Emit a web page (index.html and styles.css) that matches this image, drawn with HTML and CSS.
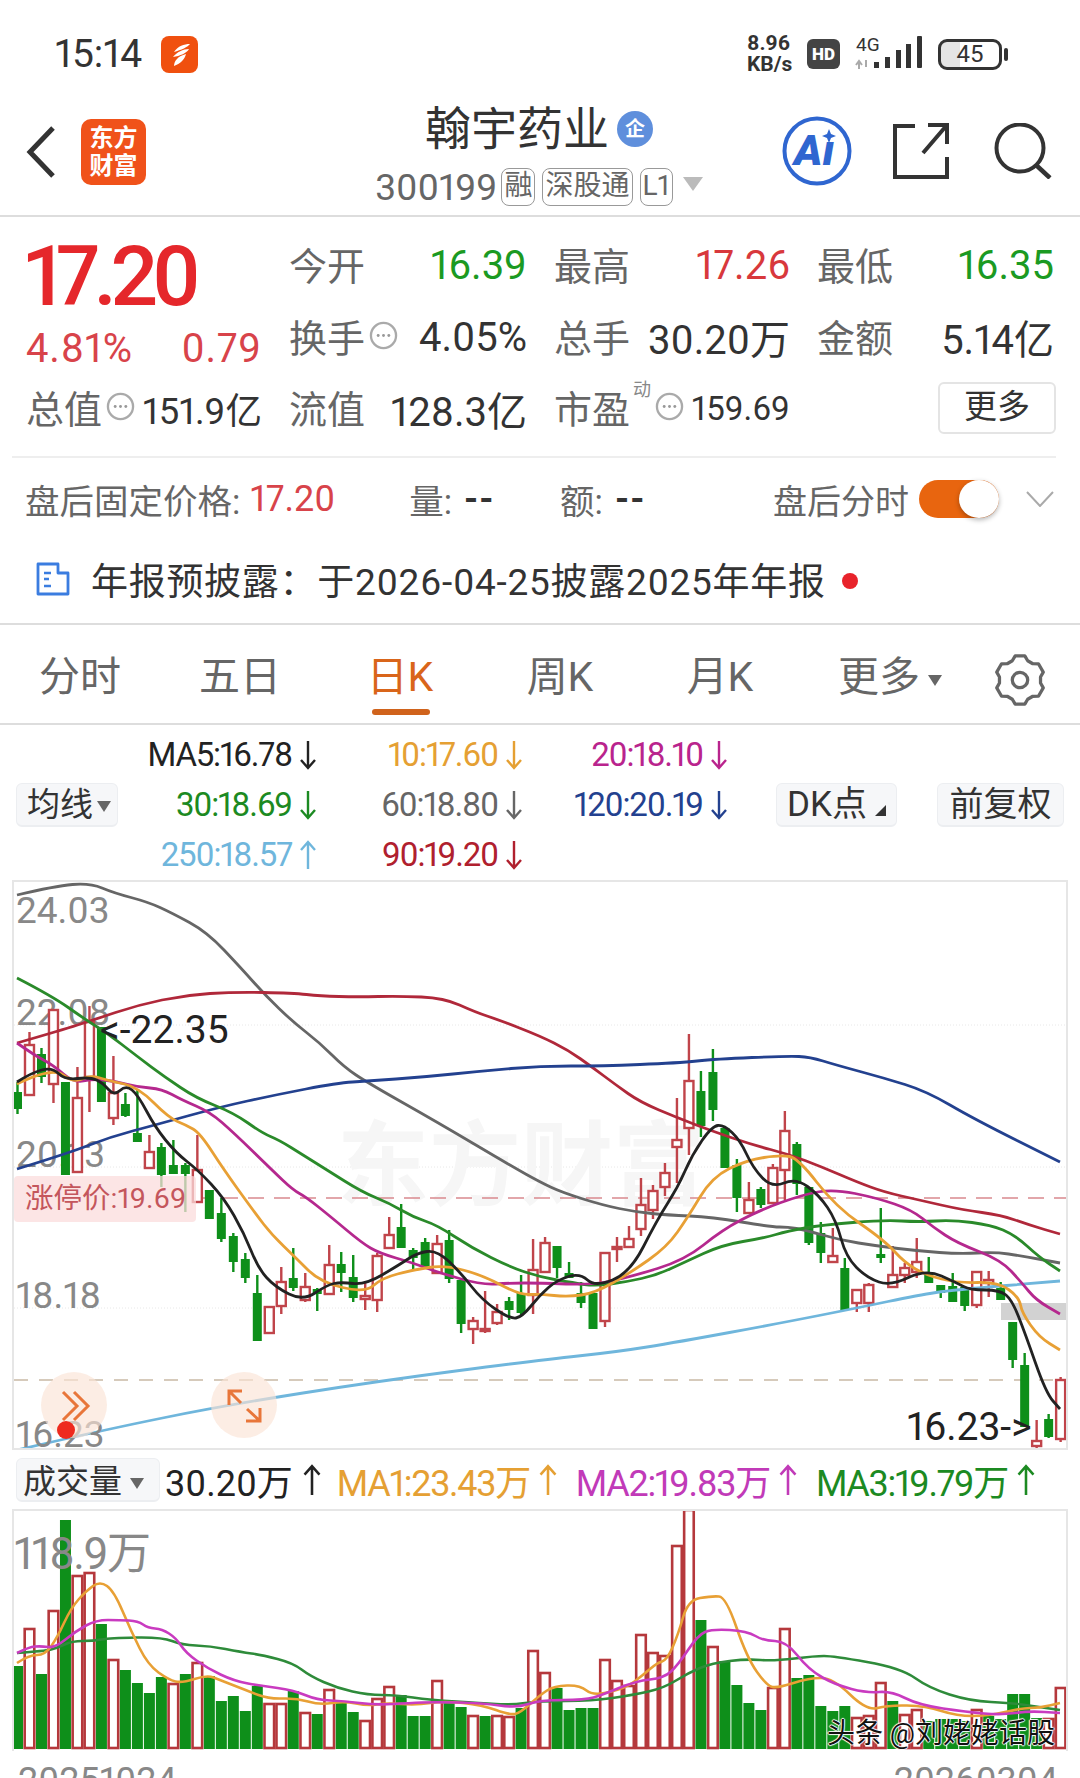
FILE: index.html
```html
<!doctype html>
<html lang="zh">
<head>
<meta charset="utf-8">
<meta name="viewport" content="width=device-width, initial-scale=1.0">
<title>翰宇药业</title>
<link rel="stylesheet" href="styles.css">
</head>

<body>
<svg class="defs" width="0" height="0">
  <symbol id="arr_down" viewBox="0 0 18 30"><path d="M9 1V28M2 20L9 28L16 20" fill="none" stroke="currentColor" stroke-width="2.4"/></symbol>
  <symbol id="arr_up" viewBox="0 0 18 30"><path d="M9 29V2M2 10L9 2L16 10" fill="none" stroke="currentColor" stroke-width="2.4"/></symbol>
  <symbol id="dots" viewBox="0 0 30 30"><circle cx="15" cy="15" r="13" fill="none" stroke="#aaa" stroke-width="2.4"/><circle cx="9.5" cy="15" r="1.5" fill="#999"/><circle cx="15" cy="15" r="1.5" fill="#999"/><circle cx="20.5" cy="15" r="1.5" fill="#999"/></symbol>
</svg>

<!-- 状态栏 -->
<div class="status">
  <span class="status_time">15:14</span>
  <svg class="status_app" viewBox="0 0 37 37">
    <rect width="37" height="37" rx="8" fill="#f0500f"/>
    <path d="M13 16C17 10 23 8 29 8C27 11 20 14 13 16ZM12 21C16 16 22 13 28 13C26 17 19 20 12 21ZM13 30C13 25 17 20 25 18C24 23 19 28 13 30Z" fill="#fff"/>
  </svg>
  <div class="status_right">
    <div class="status_speed"><span>8.96</span><span>KB/s</span></div>
    <span class="status_hd">HD</span>
    <svg class="status_signal" viewBox="0 0 70 36">
      <text x="1" y="15" class="status_4g">4G</text>
      <path d="M4 26V33M1 29L4 25L7 29M11 24V31" stroke="#aaa" stroke-width="2" fill="none"/>
      <rect x="19" y="26" width="5" height="6" fill="#333"/>
      <rect x="30" y="21" width="5" height="11" fill="#333"/>
      <rect x="41" y="14" width="5" height="18" fill="#333"/>
      <rect x="51" y="8" width="5" height="24" fill="#333"/>
      <rect x="62" y="0" width="5" height="32" rx="1" fill="#333"/>
    </svg>
    <div class="status_battery"><span>45</span></div>
  </div>
</div>

<!-- 标题栏 -->
<div class="head">
  <div class="head_left">
    <svg class="head_back" viewBox="0 0 30 52"><path d="M27 2L4 26L27 50" fill="none" stroke="#333" stroke-width="5"/></svg>
    <div class="head_logo"><span>东方</span><span>财富</span></div>
  </div>
  <div class="head_mid">
    <div class="head_name">翰宇药业<span class="head_qi">企</span></div>
    <div class="head_code">
      <span class="head_num">300199</span>
      <span class="head_tag">融</span>
      <span class="head_tag">深股通</span>
      <span class="head_tag">L1</span>
      <span class="head_tri"></span>
    </div>
  </div>
  <div class="head_right">
    <svg class="icon_ai" viewBox="0 0 70 70">
      <circle cx="35" cy="35" r="32.5" fill="none" stroke="#2f66d0" stroke-width="4"/>
      <text x="12" y="49" class="icon_ai_txt">Aı</text>
      <path d="M47 13L49 18L54 20L49 22L47 27L45 22L40 20L45 18Z" fill="#2f66d0"/>
    </svg>
    <svg class="icon_share" viewBox="0 0 56 56">
      <path d="M22 3H2V54H54V34M54 2L30 30M35 2H54V21" fill="none" stroke="#333" stroke-width="4"/>
    </svg>
    <svg class="icon_search" viewBox="0 0 58 56">
      <circle cx="26" cy="25" r="23.5" fill="none" stroke="#333" stroke-width="4"/>
      <path d="M42 42L56 55" fill="none" stroke="#333" stroke-width="4.5"/>
    </svg>
  </div>
</div>

<!-- 行情 -->
<div class="quote">
  <div class="quote_grid">
    <div class="quote_price">17.20</div>
    <div class="cell"><span class="lab">今开</span><span class="val green">16.39</span></div>
    <div class="cell"><span class="lab">最高</span><span class="val red">17.26</span></div>
    <div class="cell"><span class="lab">最低</span><span class="val green">16.35</span></div>

    <div class="cell quote_chg"><span class="val red2">4.81%</span><span class="val red2">0.79</span></div>
    <div class="cell"><span class="lab">换手<svg class="dots"><use href="#dots"/></svg></span><span class="val">4.05%</span></div>
    <div class="cell"><span class="lab">总手</span><span class="val">30.20万</span></div>
    <div class="cell"><span class="lab">金额</span><span class="val">5.14亿</span></div>

    <div class="cell"><span class="lab">总值<svg class="dots"><use href="#dots"/></svg></span><span class="val small">151.9亿</span></div>
    <div class="cell"><span class="lab">流值</span><span class="val">128.3亿</span></div>
    <div class="cell"><span class="lab">市盈<sup class="dong">动</sup><svg class="dots"><use href="#dots"/></svg></span><span class="val smaller">159.69</span></div>
    <div class="cell cell_more"><span class="more_btn">更多</span></div>
  </div>
</div>

<!-- 盘后 -->
<div class="after">
  <span class="after_lab">盘后固定价格:</span><span class="after_price">17.20</span>
  <span class="after_lab after_vol">量:</span><span class="after_dash">--</span>
  <span class="after_lab after_amt">额:</span><span class="after_dash">--</span>
  <span class="after_lab after_time">盘后分时</span>
  <span class="toggle"></span>
  <svg class="after_chev" viewBox="0 0 28 16"><path d="M1 1L14 15L27 1" fill="none" stroke="#aaa" stroke-width="2"/></svg>
</div>

<!-- 公告 -->
<div class="notice">
  <svg class="notice_icon" viewBox="0 0 34 34">
    <path d="M2 2H22V11H32V32H2Z" fill="none" stroke="#3b7de0" stroke-width="2.8" stroke-linejoin="round"/>
    <path d="M8 11H15M8 17H13M8 24H15" fill="none" stroke="#3b7de0" stroke-width="2.6"/>
  </svg>
  <span class="notice_txt">年报预披露：于2026-04-25披露2025年年报</span>
  <span class="notice_dot"></span>
</div>

<!-- 周期 -->
<div class="tabs">
  <span class="tab">分时</span>
  <span class="tab">五日</span>
  <span class="tab tab_on">日K</span>
  <span class="tab">周K</span>
  <span class="tab">月K</span>
  <span class="tab tab_more">更多<i class="tri_down"></i></span>
  <span class="tab">
    <svg class="tab_gear" viewBox="-27 -27 54 54">
      <path d="M-8 -20L-5 -25H5L8 -20L13.3 -16.9L19.15 -16.83L24.15 -8.17L21.32 -3.07V3.07L24.15 8.17L19.15 16.83L13.3 16.9L8 20L5 25H-5L-8 20L-13.3 16.9L-19.15 16.83L-24.15 8.17L-21.32 3.07V-3.07L-24.15 -8.17L-19.15 -16.83L-13.3 -16.9Z" fill="none" stroke="#666" stroke-width="3.4" stroke-linejoin="round"/>
      <circle r="8" fill="none" stroke="#666" stroke-width="3.4"/>
    </svg>
  </span>
</div>

<!-- 均线 -->
<div class="ma">
  <span class="chip chip_ma">均线<i class="tri_down"></i></span>
  <div class="ma_grid">
    <span class="ma_item c5">MA5:16.78<svg class="arr"><use href="#arr_down"/></svg></span>
    <span class="ma_item c10">10:17.60<svg class="arr"><use href="#arr_down"/></svg></span>
    <span class="ma_item c20">20:18.10<svg class="arr"><use href="#arr_down"/></svg></span>
    <span class="ma_item c30">30:18.69<svg class="arr"><use href="#arr_down"/></svg></span>
    <span class="ma_item c60">60:18.80<svg class="arr"><use href="#arr_down"/></svg></span>
    <span class="ma_item c120">120:20.19<svg class="arr"><use href="#arr_down"/></svg></span>
    <span class="ma_item c250">250:18.57<svg class="arr"><use href="#arr_up"/></svg></span>
    <span class="ma_item c90">90:19.20<svg class="arr"><use href="#arr_down"/></svg></span>
  </div>
  <span class="chip chip_dk">DK点<i class="tri_corner"></i></span>
  <span class="chip chip_fq">前复权</span>
</div>

<!-- K线 -->
<div class="chart">
  <svg class="chart_svg" viewBox="14 882 1052 568" width="1052" height="568">
    <g id="grid">
      <path class="line_dot" d="M14 1025H1066M14 1167H1066M14 1308H1066"/>
      <text x="337" y="1198" class="wm">东方财富</text>
      <rect x="1001" y="1303" width="65" height="17" fill="#d2d2d2"/>
      <path class="line_limit" d="M196 1198H1066"/>
      <path class="line_low" d="M14 1380H1066"/>
    </g>
    <text x="16" y="923" class="axis">24.03</text>
    <text x="16" y="1025" class="axis">22.08</text>
    <text x="16" y="1167" class="axis">20.13</text>
    <text x="16" y="1308" class="axis">18.18</text>
    <g id="kline"></g>
    <g id="ma_lines"></g>
    <text x="16" y="1447" class="axis">16.23</text>
    <text x="100" y="1043" class="flag">&lt;-22.35</text>
    <text x="907" y="1440" class="flag">16.23-&gt;</text>
    <rect x="14" y="1176" width="182" height="46" rx="4" fill="#fbdcdc" fill-opacity="0.75"/>
    <text x="25" y="1208" class="limit_txt">涨停价:19.69</text>
    <circle cx="74" cy="1405" r="33" fill="#fbe3d6" fill-opacity="0.65"/>
    <path d="M63 1392L77 1406L63 1420M74 1392L88 1406L74 1420" fill="none" stroke="#e8763a" stroke-width="3"/>
    <circle cx="66" cy="1430" r="9" fill="#ee2a1e"/>
    <circle cx="244" cy="1405" r="33" fill="#fbe3d6" fill-opacity="0.65"/>
    <path d="M242 1391H229V1405M229 1391L241 1403M260 1408V1421H246M260 1421L247 1409" fill="none" stroke="#e8763a" stroke-width="3"/>
  </svg>
</div>

<!-- 成交量 -->
<div class="volbar">
  <span class="chip chip_vol">成交量<i class="tri_down"></i></span>
  <span class="vol_item">30.20万<svg class="arr"><use href="#arr_up"/></svg></span>
  <span class="vol_item vol_ma c10">MA1:23.43万<svg class="arr"><use href="#arr_up"/></svg></span>
  <span class="vol_item vol_ma m2">MA2:19.83万<svg class="arr"><use href="#arr_up"/></svg></span>
  <span class="vol_item vol_ma c30">MA3:19.79万<svg class="arr"><use href="#arr_up"/></svg></span>
</div>

<div class="vol">
  <svg class="chart_svg" viewBox="14 1513 1052 240" width="1052" height="240">
    <g id="vol_bars"></g>
    <g id="vol_lines"></g>
    <text x="14" y="1571" class="axis vol_max">118.9万</text>
  </svg>
  <span class="vol_mark">头条 @刘姥姥话股</span>
</div>

<div class="dates"><span>20251024</span><span>20260304</span></div>

<script src="chart.js"></script>
</body>
</html>
```

FILE: styles.css
```css
* {
  margin: 0;
  padding: 0;
  box-sizing: border-box;
}
html,
body {
  width: 1080px;
  height: 1778px;
  overflow: hidden;
  background-color: #fff;
  font-family: Roboto, "Noto Sans CJK SC", sans-serif;
  font-variant-numeric: proportional-nums;
  color: #333;
}
.defs {
  position: absolute;
}
i {
  font-style: normal;
}
.green { color: #1b9a22; }
.red { color: #d8383c; }
.red2 { color: #d8434a; }
.c5 { color: #222; }
.c10 { color: #e5a033; }
.c20 { color: #b9248d; }
.c30 { color: #1c8a22; }
.c60 { color: #666; }
.c120 { color: #23418f; }
.c250 { color: #6fb6dc; }
.c90 { color: #b0202e; }
.m2 { color: #c13ab8; }

/* 状态栏 */
.status {
  height: 88px;
  padding: 0 78px 0 55px;
  display: flex;
  align-items: center;
}
.status_time {
  font-size: 39px;
  color: #333;
  margin-top: 20px;
}
.status_app {
  width: 37px;
  height: 37px;
  margin: 20px 0 0 19px;
}
.status_right {
  margin-left: auto;
  display: flex;
  align-items: center;
  margin-top: 20px;
}
.status_speed {
  display: flex;
  flex-direction: column;
  font-size: 21px;
  font-weight: 700;
  line-height: 21px;
  width: 52px;
  white-space: nowrap;
}
.status_hd {
  width: 33px;
  height: 30px;
  margin-left: 8px;
  background-color: #444;
  border-radius: 6px;
  color: #fff;
  font-size: 17px;
  font-weight: 900;
  line-height: 30px;
  text-align: center;
}
.status_signal {
  width: 70px;
  height: 36px;
  margin-left: 15px;
}
.status_4g {
  font-size: 19px;
  fill: #333;
}
.status_battery {
  width: 64px;
  height: 31px;
  margin-left: 13px;
  border: 3px solid #333;
  border-radius: 9px;
  position: relative;
  text-align: center;
  font-size: 24px;
  line-height: 25px;
  background: linear-gradient(to right, #e4e4e4 32%, #fff 32%);
}
.status_battery::after {
  content: "";
  position: absolute;
  right: -9px;
  top: 6px;
  width: 4px;
  height: 13px;
  background-color: #333;
  border-radius: 2px;
}

/* 标题栏 */
.head {
  height: 129px;
  border-bottom: 2px solid #ddd;
  display: grid;
  grid-template-columns: 1fr auto 1fr;
  align-items: start;
  padding: 0 28px 0 26px;
}
.head_left {
  display: flex;
  align-items: center;
  margin-top: 31px;
}
.head_back {
  width: 30px;
  height: 52px;
}
.head_logo {
  width: 65px;
  height: 66px;
  margin-left: 25px;
  background-color: #f0521a;
  border-radius: 10px;
  color: #fff;
  font-size: 24px;
  font-weight: 700;
  line-height: 28px;
  display: flex;
  flex-direction: column;
  align-items: center;
  justify-content: center;
}
.head_mid {
  display: flex;
  flex-direction: column;
  align-items: center;
}
.head_name {
  font-size: 46px;
  line-height: 60px;
  margin-top: 11px;
  color: #333;
  display: flex;
  align-items: center;
}
.head_qi {
  width: 36px;
  height: 36px;
  margin-left: 8px;
  border-radius: 50%;
  background-color: #5f8fdc;
  color: #fff;
  font-size: 20px;
  font-weight: 700;
  line-height: 36px;
  text-align: center;
}
.head_code {
  display: flex;
  align-items: center;
  height: 38px;
  margin-top: 9px;
}
.head_num {
  font-size: 37px;
  color: #666;
  margin-right: 4px;
}
.head_tag {
  height: 38px;
  border: 1.5px solid #999;
  border-radius: 8px;
  padding: 0 2px;
  margin-right: 7px;
  font-size: 28px;
  line-height: 34px;
  color: #666;
}
.head_tri {
  width: 0;
  height: 0;
  margin: -6px 0 0 3px;
  border-left: 10px solid transparent;
  border-right: 10px solid transparent;
  border-top: 14px solid #bbb;
}
.head_right {
  display: flex;
  justify-content: flex-end;
  align-items: center;
  margin-top: 28px;
}
.icon_ai {
  width: 70px;
  height: 70px;
}
.icon_ai_txt {
  font-size: 43px;
  font-weight: 900;
  font-style: italic;
  fill: #2f66d0;
}
.icon_share {
  width: 56px;
  height: 56px;
  margin-left: 41px;
}
.icon_search {
  width: 58px;
  height: 56px;
  margin-left: 45px;
}

/* 行情 */
.quote {
  margin: 0 24px 0 12px;
  padding: 12px 0 12px 14px;
  border-bottom: 2px solid #eee;
  height: 241px;
}
.quote_grid {
  display: grid;
  grid-template-columns: 236px 238px 236px 237px;
  grid-template-rows: 72px 72px 71px;
  column-gap: 27px;
  align-items: center;
}
.cell {
  display: flex;
  justify-content: space-between;
  align-items: center;
  white-space: nowrap;
}
.lab {
  font-size: 38px;
  color: #666;
  display: flex;
  align-items: center;
  position: relative;
  margin-top: -4px;
}
.val {
  font-size: 40px;
  color: #333;
}
.val.green { color: #1b9a22; }
.val.red { color: #d8383c; }
.val.red2 { color: #d8434a; font-size: 40px; letter-spacing: 0.8px; }
.val.small {
  font-size: 36.5px;
}
.val.smaller {
  font-size: 33px;
}
.dots {
  width: 29px;
  height: 29px;
  margin-left: 4px;
}
.dong {
  font-size: 18px;
  color: #888;
  line-height: 18px;
  margin: -34px 0 0 3px;
}
.quote_price {
  font-size: 84px;
  font-weight: 500;
  letter-spacing: -6.5px;
  line-height: 60px;
  color: #e5272b;
  margin: 24px 0 0 -2px;
}
.quote_chg {
  padding-top: 22px;
}
.cell_more {
  justify-content: flex-end;
}
.more_btn {
  width: 118px;
  height: 52px;
  border: 2px solid #e4e4e4;
  border-radius: 6px;
  font-size: 33px;
  line-height: 46px;
  text-align: center;
  margin-top: -2px;
  margin-right: -2px;
}

/* 盘后 */
.after {
  height: 82px;
  padding: 0 26px 0 25px;
  display: flex;
  align-items: center;
  white-space: nowrap;
}
.after_lab {
  font-size: 34.5px;
  color: #666;
}
.after_price {
  font-size: 36px;
  color: #d8434a;
  margin-left: 10px;
}
.after_vol { margin-left: 74px; }
.after_amt { margin-left: 63px; }
.after_dash {
  font-size: 36px;
  font-weight: 700;
  letter-spacing: 1px;
  margin-left: 12px;
  width: 33px;
}
.after_time {
  margin-left: auto;
  font-size: 34px;
}
.toggle {
  width: 80px;
  height: 38px;
  margin-left: 10px;
  border-radius: 19px;
  background-color: #e8650f;
  position: relative;
}
.toggle::after {
  content: "";
  position: absolute;
  right: 0;
  top: 0;
  width: 40px;
  height: 38px;
  border-radius: 50%;
  background-color: #fff;
  box-shadow: 0 2px 5px rgba(0, 0, 0, 0.3);
}
.after_chev {
  width: 28px;
  height: 16px;
  margin-left: 27px;
}

/* 公告 */
.notice {
  height: 85px;
  border-bottom: 2px solid #ddd;
  padding: 0 0 6px 36px;
  display: flex;
  align-items: center;
}
.notice_icon {
  width: 34px;
  height: 34px;
}
.notice_txt {
  font-size: 37px;
  letter-spacing: 0.7px;
  margin-left: 21px;
  color: #333;
  white-space: nowrap;
}
.notice_dot {
  width: 16px;
  height: 16px;
  margin: 4px 0 0 16px;
  border-radius: 50%;
  background-color: #e8232b;
}

/* 周期 */
.tabs {
  height: 100px;
  border-bottom: 2px solid #ddd;
  display: grid;
  grid-template-columns: repeat(6, 160px) 120px;
  align-items: center;
}
.tab {
  font-size: 41px;
  color: #666;
  text-align: center;
  position: relative;
  height: 98px;
  line-height: 104px;
}
.tab_on {
  color: #d9651a;
}
.tab_on::after {
  content: "";
  position: absolute;
  left: 52px;
  bottom: 8px;
  width: 58px;
  height: 6px;
  border-radius: 3px;
  background-color: #d0631c;
}
.tab_more {
  padding-left: 20px;
}
.tab_gear {
  width: 52px;
  height: 52px;
  vertical-align: middle;
}
.tri_down {
  display: inline-block;
  width: 0;
  height: 0;
  margin-left: 8px;
  vertical-align: middle;
  border-left: 7px solid transparent;
  border-right: 7px solid transparent;
  border-top: 11px solid #666;
}
.tri_corner {
  display: inline-block;
  width: 0;
  height: 0;
  margin-left: 8px;
  border-left: 11px solid transparent;
  border-bottom: 11px solid #333;
}

/* 均线 */
.ma {
  height: 155px;
  padding: 4px 16px 0;
  display: flex;
  align-items: center;
}
.chip {
  height: 44px;
  border: 1px solid #eceef1;
  border-bottom-width: 2px;
  border-radius: 6px;
  background-color: #f6f7f9;
  font-size: 33px;
  line-height: 41px;
  color: #333;
  white-space: nowrap;
  text-align: center;
}
.chip_ma { width: 102px; padding-left: 4px; }
.chip_ma .tri_down { margin-left: 4px; }
.chip_dk { width: 121px; margin-left: 48px; font-size: 35px; }
.chip_fq { width: 127px; margin-left: 40px; font-size: 34px; }
.ma_grid {
  width: 610px;
  display: grid;
  grid-template-columns: 199px 206px 205px;
  grid-template-rows: 50px 50px 50px;
  align-items: center;
}
.ma_item {
  display: flex;
  justify-content: flex-end;
  align-items: center;
  font-size: 33px;
  letter-spacing: -1.2px;
  white-space: nowrap;
}
.arr {
  width: 18px;
  height: 30px;
  margin-left: 7px;
}

/* K线 */
.chart {
  height: 570px;
  margin: 0 12px;
  border: 2px solid #e6e6e6;
  overflow: hidden;
}
.chart_svg {
  display: block;
}
.line_dot {
  stroke: #e8e8e8;
  stroke-width: 1;
  stroke-dasharray: 1 2;
  fill: none;
}
.line_limit {
  stroke: #d9898f;
  stroke-width: 1.5;
  stroke-dasharray: 16 10;
  fill: none;
}
.line_low {
  stroke: #c9b9a5;
  stroke-width: 1.5;
  stroke-dasharray: 14 11;
  fill: none;
}
.wm {
  font-size: 92px;
  font-weight: 700;
  fill: #f6f6f6;
}
.axis {
  font-size: 37px;
  fill: #888;
}
.flag {
  font-size: 39px;
  fill: #222;
}
.limit_txt {
  font-size: 28.5px;
  fill: #c4565c;
}
.vol_max {
  font-size: 44px;
  letter-spacing: -1.5px;
}

/* 成交量 */
.volbar {
  height: 59px;
  padding: 0 16px;
  display: flex;
  align-items: center;
  white-space: nowrap;
}
.chip_vol {
  width: 144px;
  height: 44px;
  line-height: 46px;
  text-align: left;
  padding-left: 6px;
}
.vol_item {
  display: flex;
  align-items: center;
  font-size: 36px;
  margin-left: 5px;
  color: #222;
}
.vol_item .arr {
  margin-left: 9px;
  width: 20px;
  height: 32px;
}
.vol_ma {
  letter-spacing: -1.3px;
}
.vol_ma .arr {
  margin-left: 8px;
}
.vol_ma.c10 { margin-left: 15px; color: #e5a033; }
.vol_ma.m2 { margin-left: 18px; color: #c13ab8; }
.vol_ma.c30 { margin-left: 18px; color: #1c8a22; }
.vol {
  height: 242px;
  margin: 0 12px;
  border: 2px solid #e6e6e6;
  border-bottom: none;
  position: relative;
  overflow: hidden;
}
.vol_mark {
  position: absolute;
  right: 11px;
  bottom: 0;
  font-size: 28px;
  color: #111;
  white-space: nowrap;
  text-shadow: 1px 0 1px #fff, -1px 0 1px #fff, 0 1px 1px #fff, 0 -1px 1px #fff;
}
.dates {
  display: flex;
  justify-content: space-between;
  padding: 10px 22px 0 18px;
  font-size: 36px;
  line-height: 40px;
  color: #888;
}
```

FILE: chart.js
```js
// [涨跌, 实体上, 实体下, 最高, 最低] 0绿 1红
var candles = [
  [0,1092,1109,1082,1114],[1,1045,1095,1032,1095],[0,1054,1077,1048,1083],[1,1010,1084,1010,1103],
  [0,1082,1175,1082,1175],[1,1098,1172,1067,1172],[1,1022,1077,1006,1112],[0,1027,1102,1027,1102],
  [1,1093,1118,1056,1125],[0,1104,1116,1093,1117],[0,1133,1142,1090,1142],[1,1152,1168,1135,1168],
  [0,1147,1175,1143,1187],[0,1165,1174,1140,1174],[0,1165,1174,1163,1212],[1,1170,1202,1135,1202],
  [0,1190,1219,1190,1219],[0,1213,1239,1198,1242],[0,1236,1262,1233,1272],[0,1259,1278,1253,1283],
  [0,1293,1341,1275,1341],[1,1307,1333,1307,1333],[1,1282,1306,1267,1314],[0,1278,1288,1248,1291],
  [1,1287,1300,1273,1302],[0,1289,1294,1288,1311],[1,1265,1294,1245,1294],[0,1264,1273,1252,1292],
  [0,1277,1298,1255,1302],[1,1296,1299,1282,1310],[1,1256,1300,1253,1312],[1,1235,1248,1217,1248],
  [0,1227,1248,1204,1248],[0,1250,1258,1248,1269],[0,1242,1267,1238,1268],[1,1244,1273,1235,1274],
  [0,1240,1279,1230,1283],[0,1280,1324,1280,1333],[1,1321,1329,1317,1344],[1,1329,1331,1291,1333],
  [1,1312,1323,1304,1325],[0,1301,1310,1297,1320],[0,1293,1313,1275,1315],[1,1270,1295,1239,1314],
  [1,1243,1272,1237,1272],[0,1246,1268,1246,1278],[0,1273,1278,1262,1278],[0,1293,1303,1282,1308],
  [0,1293,1329,1293,1329],[1,1253,1321,1253,1327],[1,1247,1249,1237,1262],[1,1239,1247,1226,1248],
  [1,1205,1229,1178,1236],[1,1191,1210,1185,1219],[1,1173,1187,1163,1196],[1,1140,1147,1098,1183],
  [1,1081,1128,1034,1155],[0,1091,1126,1071,1137],[0,1072,1110,1049,1121],[0,1128,1168,1128,1168],
  [0,1165,1198,1159,1212],[1,1200,1213,1182,1213],[0,1189,1205,1187,1208],[1,1168,1203,1164,1203],
  [1,1131,1170,1111,1200],[0,1144,1184,1142,1195],[0,1187,1243,1187,1245],[0,1233,1253,1222,1263],
  [1,1256,1262,1228,1262],[0,1268,1310,1258,1310],[1,1290,1303,1290,1312],[1,1285,1303,1283,1312],
  [0,1254,1258,1208,1263],[1,1275,1287,1246,1287],[1,1268,1275,1263,1283],[1,1262,1272,1238,1278],
  [0,1272,1283,1257,1283],[0,1285,1293,1285,1298],[0,1286,1302,1273,1302],[0,1287,1306,1287,1311],
  [1,1272,1305,1272,1308],[1,1280,1283,1271,1297],[0,1288,1300,1282,1300],[0,1322,1360,1322,1368],
  [0,1365,1427,1353,1427],[1,1441,1446,1420,1451],[0,1419,1437,1414,1438],[1,1380,1439,1377,1442]
];

var volumes = [
  [0,1668],[1,1631],[0,1676],[1,1613],[0,1522],[1,1578],[1,1575],[0,1626],[1,1662],[0,1672],[0,1685],
  [0,1695],[0,1679],[1,1686],[0,1676],[1,1665],[0,1678],[0,1703],[0,1698],[0,1713],[0,1688],[1,1706],
  [1,1706],[0,1693],[1,1715],[0,1716],[1,1692],[0,1705],[0,1714],[1,1723],[1,1701],[1,1689],[0,1697],
  [0,1718],[0,1718],[1,1683],[0,1705],[0,1709],[1,1718],[0,1718],[1,1718],[1,1719],[0,1710],[1,1653],
  [1,1675],[0,1690],[0,1712],[0,1710],[0,1710],[1,1662],[1,1683],[1,1688],[1,1637],[1,1655],[1,1658],
  [1,1548],[1,1512],[0,1622],[1,1649],[0,1663],[0,1687],[0,1705],[0,1712],[1,1690],[1,1631],[0,1680],
  [0,1677],[0,1708],[0,1713],[0,1708],[1,1720],[1,1718],[1,1685],[0,1703],[1,1717],[1,1712],[0,1723],
  [0,1721],[0,1721],[0,1723],[1,1712],[0,1718],[0,1721],[0,1696],[0,1696],[0,1720],[1,1721],[1,1690]
];

var maLines = [
  { color: "#6fb6dc", pts: [17,1450,103,1430,227,1405,379,1381,540,1360,616,1352,678,1342,781,1323,857,1308,919,1295,953,1290,1060,1281] },
  { color: "#666666", pts: [17,895,55,886,90,883,114,893,148,902,172,913,207,932,241,968,265,995,293,1022,320,1043,344,1067,368,1083,437,1122,513,1167,540,1182,561,1192,602,1205,636,1212,667,1215,712,1217,771,1227,788,1227,805,1230,840,1240,877,1246,919,1251,960,1254,995,1252,1022,1256,1060,1263] },
  { color: "#b0283a", pts: [17,1043,62,1030,93,1020,138,1005,186,995,234,992,293,993,320,996,358,997,399,996,444,998,475,1012,499,1020,540,1036,568,1050,592,1067,616,1085,640,1102,678,1118,712,1131,753,1145,788,1154,822,1167,857,1182,884,1192,919,1200,963,1210,1001,1215,1029,1225,1060,1234] },
  { color: "#23418f", pts: [17,1169,69,1153,110,1137,155,1125,220,1107,275,1095,337,1083,368,1081,424,1077,482,1071,540,1066,602,1066,678,1063,716,1059,788,1056,810,1057,836,1065,884,1078,926,1091,974,1119,1060,1162] },
  { color: "#2a8a2a", pts: [17,978,52,996,86,1020,107,1033,138,1057,165,1077,196,1098,234,1113,262,1133,279,1140,303,1155,327,1170,362,1192,389,1203,413,1217,437,1225,472,1248,510,1267,540,1277,574,1283,595,1286,626,1282,657,1275,685,1262,722,1245,764,1238,788,1231,822,1225,884,1220,919,1222,953,1220,991,1225,1015,1235,1039,1257,1060,1271] },
  { color: "#b5288e", pts: [17,1043,34,1055,53,1065,74,1083,93,1079,114,1081,138,1087,162,1089,182,1100,210,1112,234,1133,272,1170,293,1190,306,1197,331,1217,362,1243,379,1253,413,1263,437,1272,482,1285,510,1283,540,1283,592,1285,630,1277,685,1260,722,1230,760,1210,802,1195,833,1189,877,1198,912,1210,933,1227,957,1243,1001,1260,1022,1283,1036,1300,1060,1314] },
  { color: "#e8a035", pts: [17,1084,52,1067,74,1083,90,1075,110,1081,138,1087,169,1118,186,1125,200,1133,224,1170,255,1213,272,1235,296,1258,320,1282,365,1293,382,1278,413,1270,444,1265,482,1275,520,1295,540,1294,568,1297,595,1293,630,1273,667,1247,688,1217,712,1177,747,1160,781,1155,798,1158,836,1207,884,1240,905,1263,926,1275,957,1283,998,1282,1019,1297,1022,1313,1039,1337,1060,1350] },
  { color: "#222222", pts: [17,1082,31,1073,52,1067,65,1080,90,1077,103,1083,114,1096,126,1085,138,1095,155,1127,176,1153,198,1170,224,1198,244,1233,258,1268,275,1287,303,1301,327,1285,341,1282,365,1285,399,1265,417,1253,437,1250,461,1273,482,1300,510,1319,522,1317,540,1295,557,1280,580,1273,595,1287,630,1273,657,1220,678,1187,692,1155,712,1126,724,1125,740,1140,753,1168,772,1188,796,1178,819,1195,836,1220,846,1257,867,1278,891,1286,926,1269,957,1283,970,1290,1000,1290,1012,1300,1025,1333,1046,1393,1060,1409] }
];

var volLines = [
  { color: "#2e8b3a", pts: [17,1655,45,1653,57,1650,72,1643,93,1643,110,1640,162,1639,182,1647,210,1648,241,1654,262,1657,293,1665,310,1678,337,1690,368,1697,396,1697,430,1702,482,1705,510,1707,540,1703,592,1703,633,1697,664,1690,688,1675,712,1665,747,1661,774,1663,815,1658,833,1658,901,1670,929,1690,970,1703,1012,1705,1032,1708,1060,1712] },
  { color: "#e8a035", pts: [17,1665,29,1657,45,1657,57,1640,71,1610,86,1593,100,1583,114,1593,131,1633,148,1667,169,1682,182,1685,207,1677,220,1682,248,1693,269,1701,296,1700,320,1707,344,1703,368,1708,386,1705,417,1707,444,1703,482,1707,510,1717,520,1715,540,1697,554,1688,580,1687,593,1698,626,1690,643,1677,657,1665,667,1662,678,1637,688,1602,712,1598,726,1599,747,1660,767,1688,778,1690,809,1680,833,1680,867,1713,888,1707,926,1708,957,1718,988,1718,1022,1710,1039,1710,1060,1705] },
  { color: "#c93bc0", pts: [17,1655,29,1649,41,1648,55,1650,76,1633,96,1622,120,1622,138,1623,148,1630,162,1631,176,1640,186,1655,207,1670,234,1683,262,1688,293,1692,317,1702,344,1703,375,1707,410,1705,434,1704,482,1705,517,1710,540,1702,585,1702,602,1697,636,1683,664,1680,678,1667,698,1637,712,1631,747,1633,764,1643,786,1643,809,1672,836,1687,867,1695,891,1693,919,1707,967,1714,1001,1717,1029,1713,1060,1715] }
];

var NS = "http://www.w3.org/2000/svg";
var RED = "#c0444a";
var GREEN = "#0e8f1a";

function add(parent, tag, attrs) {
  var el = document.createElementNS(NS, tag);
  for (var k in attrs) {
    el.setAttribute(k, attrs[k]);
  }
  parent.appendChild(el);
}

// 过中点做二次曲线,折线看着不那么硬
function drawLine(parent, line, width) {
  var p = line.pts;
  var d = "M" + p[0] + " " + p[1];
  for (var i = 2; i < p.length - 2; i += 2) {
    var mx = (p[i] + p[i + 2]) / 2;
    var my = (p[i + 1] + p[i + 3]) / 2;
    d += "Q" + p[i] + " " + p[i + 1] + " " + mx + " " + my;
  }
  d += "L" + p[p.length - 2] + " " + p[p.length - 1];
  add(parent, "path", { d: d, fill: "none", stroke: line.color, "stroke-width": width, "stroke-linejoin": "round" });
}

window.onload = function() {
  var kline = document.getElementById("kline");
  var i, c, x;
  for (i = 0; i < candles.length; i++) {
    c = candles[i];
    x = 17.5 + i * 11.99;
    if (c[0] === 0) {
      add(kline, "rect", { x: x - 1.2, y: c[3], width: 2.4, height: c[4] - c[3], fill: GREEN });
      add(kline, "rect", { x: x - 4.5, y: c[1], width: 9, height: c[2] - c[1], fill: GREEN });
    } else {
      add(kline, "rect", { x: x - 1.2, y: c[3], width: 2.4, height: c[4] - c[3], fill: RED });
      add(kline, "rect", { x: x - 4.5, y: c[1], width: 9, height: c[2] - c[1], fill: "#fff", stroke: RED, "stroke-width": 2.4 });
    }
  }

  var maBox = document.getElementById("ma_lines");
  for (i = 0; i < maLines.length; i++) {
    drawLine(maBox, maLines[i], 2.8);
  }

  var bars = document.getElementById("vol_bars");
  for (i = 0; i < volumes.length; i++) {
    c = volumes[i];
    x = 17.5 + i * 11.99;
    if (c[0] === 0) {
      add(bars, "rect", { x: x - 5.5, y: c[1], width: 11, height: 1751 - c[1], fill: GREEN });
    } else {
      add(bars, "rect", { x: x - 4.8, y: c[1], width: 9.6, height: 1750 - c[1], fill: "#fff", stroke: "#b5383c", "stroke-width": 2.6 });
    }
  }

  var volBox = document.getElementById("vol_lines");
  for (i = 0; i < volLines.length; i++) {
    drawLine(volBox, volLines[i], 2.6);
  }
};
```
